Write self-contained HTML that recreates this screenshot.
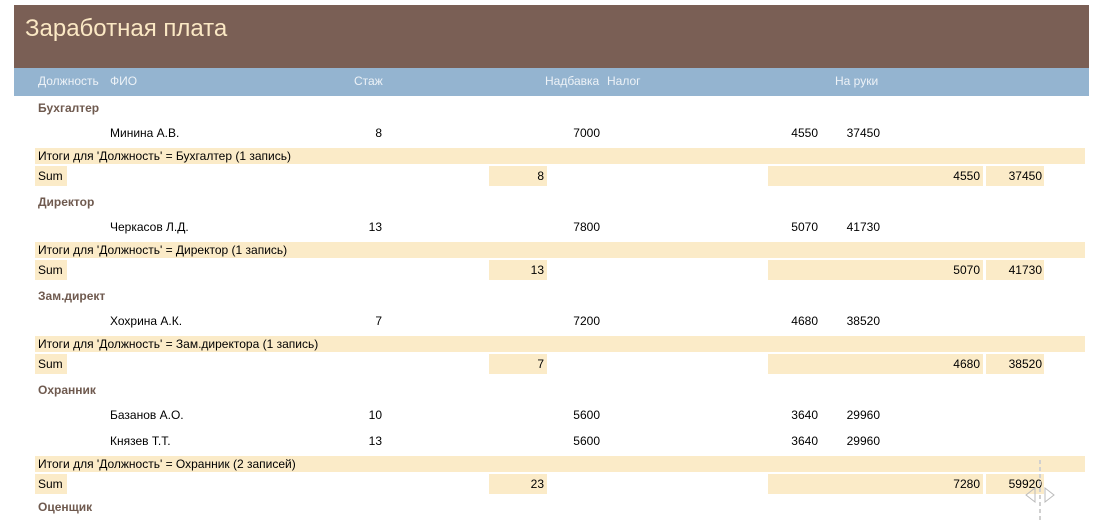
<!DOCTYPE html>
<html><head><meta charset="utf-8"><style>
body{margin:0;width:1106px;height:525px;overflow:hidden;background:#fff;font-family:"Liberation Sans","DejaVu Sans",sans-serif;font-size:12px;color:#000;position:relative}
div{position:absolute;white-space:nowrap}
.t{left:14px;top:5px;width:1075px;height:63px;background:#7a5f55}
.t span{position:absolute;left:11px;top:10px;font-size:24px;color:#fbe8c4}
.h{left:14px;top:68px;width:1075px;height:28px;background:#94b4d0;color:#edf2f7}
.g{color:#6f5a4f;font-weight:bold;left:38px}
.b{background:#fbebc8}
.r{text-align:right}
</style></head><body>
<div class="t"><span>Заработная плата</span></div>
<div class="h"><div style="left:24px;top:6px">Должность</div><div style="left:96px;top:6px">ФИО</div><div style="left:340px;top:6px">Стаж</div><div style="left:531px;top:6px">Надбавка</div><div style="left:593px;top:6px">Налог</div><div style="left:821px;top:6px">На руки</div></div>
<div id="c"></div>
<script>
var groups=[["Бухгалтер",[["Минина А.В.","8","7000","4550","37450"]],"Итоги для 'Должность' =  Бухгалтер (1 запись)","8","4550","37450"],
["Директор",[["Черкасов Л.Д.","13","7800","5070","41730"]],"Итоги для 'Должность' =  Директор (1 запись)","13","5070","41730"],
["Зам.директ",[["Хохрина А.К.","7","7200","4680","38520"]],"Итоги для 'Должность' =  Зам.директора (1 запись)","7","4680","38520"],
["Охранник",[["Базанов А.О.","10","5600","3640","29960"],["Князев Т.Т.","13","5600","3640","29960"]],"Итоги для 'Должность' =  Охранник (2 записей)","23","7280","59920"]];
var h="",y=100;
groups.forEach(function(g){
h+='<div class="g" style="top:'+(y+1)+'px">'+g[0]+'</div>';y+=25;
g[1].forEach(function(d){
var t=y+1;
h+='<div style="left:110px;top:'+t+'px">'+d[0]+'</div><div class="r" style="left:300px;width:82px;top:'+t+'px">'+d[1]+'</div><div class="r" style="left:520px;width:80px;top:'+t+'px">'+d[2]+'</div><div class="r" style="left:760px;width:58px;top:'+t+'px">'+d[3]+'</div><div class="r" style="left:830px;width:50px;top:'+t+'px">'+d[4]+'</div>';y+=26;});
y-=3;
h+='<div class="b" style="left:35px;top:'+y+'px;width:1050px;height:16px"><div style="left:3px;top:1px">'+g[2]+'</div></div>';y+=18;
h+='<div class="b" style="left:35px;top:'+y+'px;width:32px;height:20px"><div style="left:3px;top:3px">Sum</div></div>';
h+='<div class="b r" style="left:489px;top:'+y+'px;width:55px;padding-right:3px;height:20px;line-height:21px">'+g[3]+'</div>';
h+='<div class="b r" style="left:768px;top:'+y+'px;width:212px;padding-right:3px;height:20px;line-height:21px">'+g[4]+'</div>';
h+='<div class="b r" style="left:986px;top:'+y+'px;width:56px;padding-right:2px;height:20px;line-height:21px">'+g[5]+'</div>';
y+=28;});
h+='<div class="g" style="top:'+(y-2)+'px">Оценщик</div>';
document.getElementById('c').innerHTML=h;
</script>
<svg style="position:absolute;left:1024px;top:460px" width="34" height="60"><line x1="16" y1="0" x2="16" y2="60" stroke="#d0d0d0" stroke-width="2" stroke-dasharray="4,3"/><path d="M11 28 L2 35 L11 42 Z M21 28 L30 35 L21 42 Z" fill="none" stroke="#bbb"/></svg>
</body></html>
